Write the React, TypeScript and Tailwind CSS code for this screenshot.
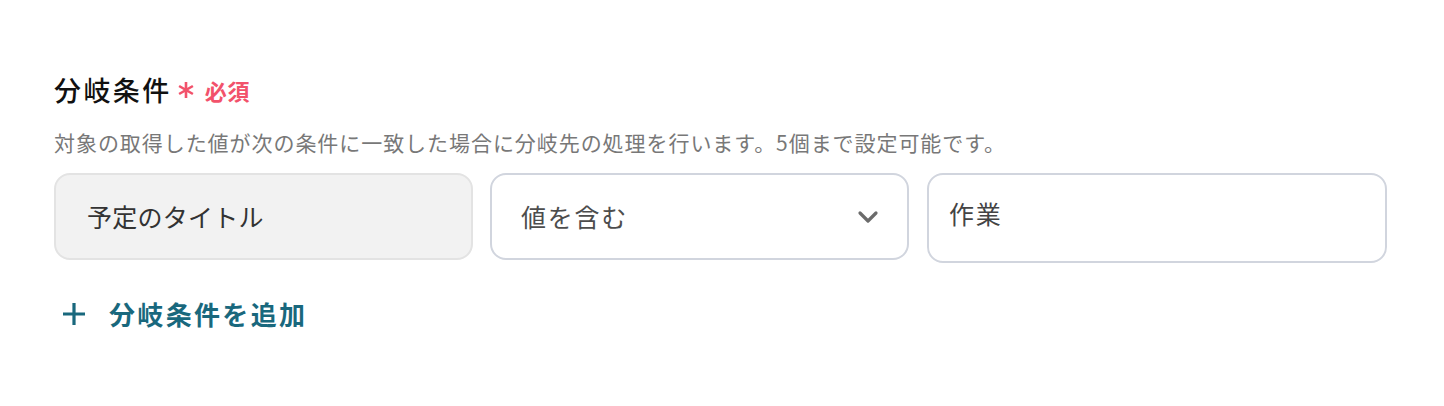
import React from 'react';

const font = { fontFamily: '"Noto Sans CJK JP", "Noto Sans", sans-serif' };

const App = () => {
  return (
    <div className="w-[1444px] h-[406px] bg-white pt-[72px] px-[54px]" style={font}>
      {/* Label */}
      <div className="flex items-center h-[36px]">
        <span className="text-[27px] leading-[36px] font-medium tracking-[0.09em] text-[#111]">分岐条件</span>
        <svg width="18" height="18" viewBox="0 0 18 18" className="ml-[5px]">
          <path d="M9 1v16M2.1 5l13.8 8M2.1 13l13.8-8" stroke="#f2526b" strokeWidth="2.6" />
        </svg>
        <span className="ml-[10px] text-[22px] leading-[36px] font-bold tracking-[0.04em] text-[#f2526b]">必須</span>
      </div>
      <p className="mt-[19px] text-[21px] leading-[30px] tracking-[0.045em] text-[#787878]">
        対象の取得した値が次の条件に一致した場合に分岐先の処理を行います。5個まで設定可能です。
      </p>

      {/* Condition row */}
      <div className="mt-[16px] flex items-start">
        <div className="w-[419px] h-[87px] rounded-[16px] border-2 border-[#e3e3e3] bg-[#f2f2f2] flex items-center pl-[31px]">
          <span className="text-[25px] tracking-[0.01em] text-[#333]">予定のタイトル</span>
        </div>
        <div className="ml-[17px] w-[419px] h-[87px] rounded-[16px] border-2 border-[#d1d5de] bg-white flex items-center pl-[29px] pr-[28px]">
          <span className="flex-1 text-[25px] tracking-[0.07em] text-[#4d4d4d]">値を含む</span>
          <svg width="22" height="14" viewBox="0 0 22 14" fill="none">
            <path d="M3 3l8 8 8-8" stroke="#6b6b6b" strokeWidth="3.2" strokeLinecap="round" strokeLinejoin="round" />
          </svg>
        </div>
        <div className="ml-[18px] w-[460px] h-[90px] rounded-[16px] border-2 border-[#d1d5de] bg-white pl-[20px] pt-[21px]">
          <span className="text-[25px] leading-[34px] tracking-[0.07em] text-[#444]">作業</span>
        </div>
      </div>

      {/* Add button */}
      <button className="mt-[33px] flex items-center h-[36px] text-[#19687d]">
        <svg width="26" height="26" viewBox="0 0 26 26" className="ml-[7px]">
          <path d="M13 2v22M2 13h22" stroke="#19687d" strokeWidth="3.2" />
        </svg>
        <span className="ml-[22px] text-[26px] leading-[36px] font-bold tracking-[0.09em]">分岐条件を追加</span>
      </button>
    </div>
  );
};

export default App;
